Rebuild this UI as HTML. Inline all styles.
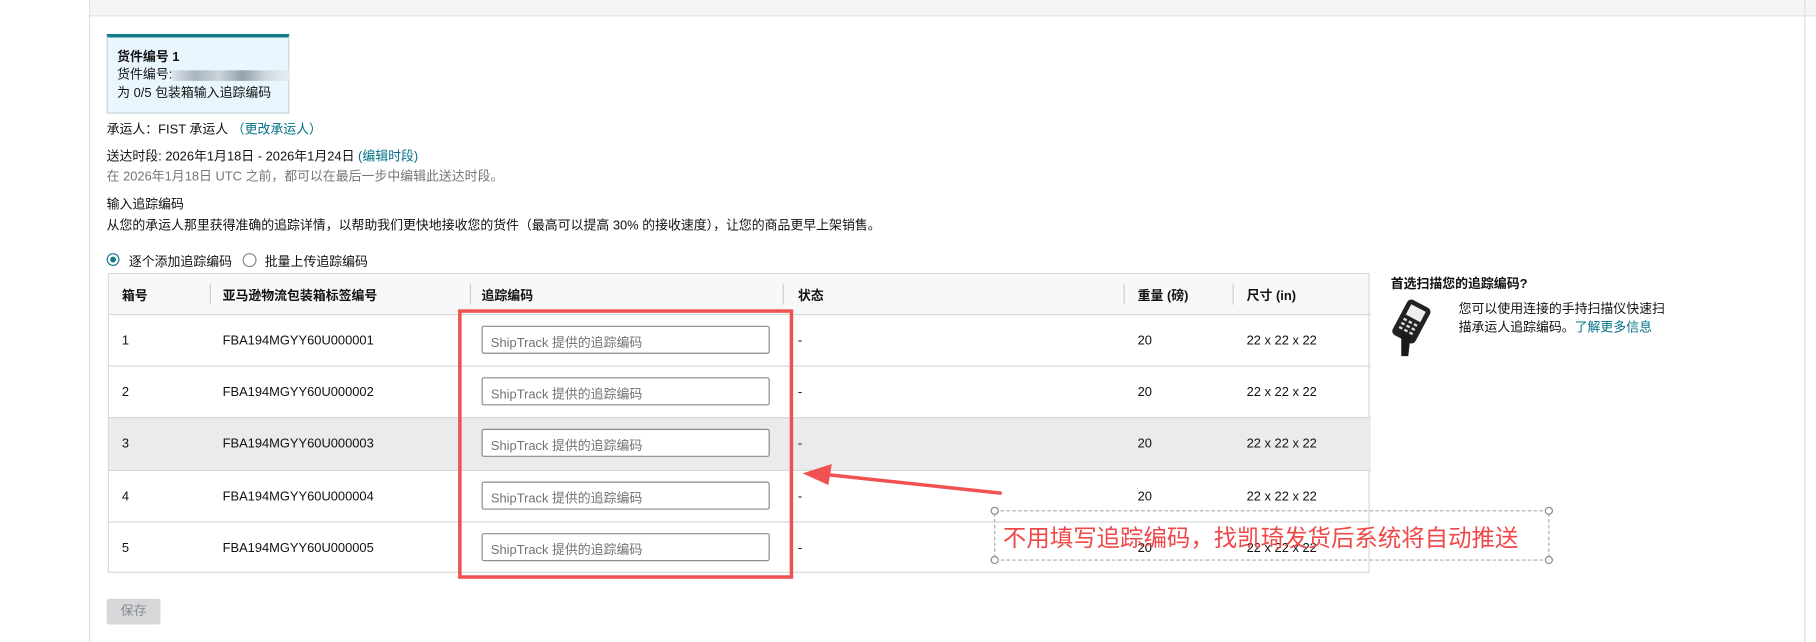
<!DOCTYPE html>
<html><head><meta charset="utf-8"><style>
html,body{margin:0;padding:0;background:#fff;width:1816px;height:642px;overflow:hidden}
#w{position:absolute;left:0;top:0;width:1550px;height:548px;transform:scale(1.17161);transform-origin:0 0;font-family:"Liberation Sans","Noto Sans CJK SC",sans-serif;font-size:11px;color:#111}
.a{position:absolute;white-space:nowrap}
.lk{color:#007185}
.g{color:#767676}
.hd{font-weight:bold}
.sep{position:absolute;top:8px;width:1px;height:18px;background:#ccc}
.row{position:absolute;left:0;width:1077px;height:44px;border-top:1px solid #d5d9d9}
.inp{position:absolute;left:318px;top:9px;width:246px;height:24px;border:1px solid #888c8c;border-radius:2px;background:#fff;box-sizing:border-box;padding:5px 0 0 7px;color:#6f7373;font-size:11px}
</style></head><body><div id="w">
<div class="a" style="left:76px;top:0;width:1474px;height:13px;background:#f5f5f5;border-bottom:1px solid #e3e3e3"></div>
<div class="a" style="left:76px;top:0;width:1px;height:548px;background:#ddd"></div>
<div class="a" style="left:1540px;top:0;width:1px;height:548px;background:#ddd"></div>

<div class="a" style="left:91px;top:29px;width:154px;height:64px;background:#e9f6fd;border:1px solid #c7d3da;border-top:3px solid #137c8b"></div>
<div class="a hd" style="left:100px;top:40px">货件编号 1</div>
<div class="a" style="left:100px;top:55px">货件编号:<span style="display:inline-block;width:100px;height:9px;background:linear-gradient(90deg,#d8dde3,#9aa5b2,#c4cbd3,#7e8a99,#c9d0d8,#e6ebef);vertical-align:middle;opacity:.8"></span></div>
<div class="a" style="left:100px;top:71px">为 0/5 包装箱输入追踪编码</div>

<div class="a" style="left:91px;top:102px">承运人：FIST 承运人 <span class="lk">（更改承运人）</span></div>
<div class="a" style="left:91px;top:125px">送达时段: 2026年1月18日 - 2026年1月24日 <span class="lk">(编辑时段)</span></div>
<div class="a g" style="left:91px;top:142px">在 2026年1月18日 UTC 之前，都可以在最后一步中编辑此送达时段。</div>
<div class="a" style="left:91px;top:166px">输入追踪编码</div>
<div class="a" style="left:91px;top:184px">从您的承运人那里获得准确的追踪详情，以帮助我们更快地接收您的货件（最高可以提高 30% 的接收速度），让您的商品更早上架销售。</div>

<div class="a" style="left:91px;top:216px;width:11px;height:11px;border:1px solid #137c8b;border-radius:50%;box-sizing:border-box"><div style="position:absolute;left:2px;top:2px;width:5px;height:5px;border-radius:50%;background:#137c8b"></div></div>
<div class="a" style="left:110px;top:215px">逐个添加追踪编码</div>
<div class="a" style="left:207px;top:216px;width:12px;height:12px;border:1px solid #888;border-radius:50%;box-sizing:border-box"></div>
<div class="a" style="left:226px;top:215px">批量上传追踪编码</div>

<div class="a" style="left:92px;top:233px;width:1077px;height:256px;border:1px solid #d5d9d9;box-sizing:border-box">
 <div class="a" style="left:0;top:0;width:1075px;height:34px;background:#f7f8f8"></div>
 <div class="a hd" style="left:11px;top:10px">箱号</div><div class="sep" style="left:86px"></div>
 <div class="a hd" style="left:97px;top:10px">亚马逊物流包装箱标签编号</div><div class="sep" style="left:308px"></div>
 <div class="a hd" style="left:318px;top:10px">追踪编码</div><div class="sep" style="left:575px"></div>
 <div class="a hd" style="left:588px;top:10px">状态</div><div class="sep" style="left:866px"></div>
 <div class="a hd" style="left:878px;top:10px">重量 (磅)</div><div class="sep" style="left:959px"></div>
 <div class="a hd" style="left:971px;top:10px">尺寸 (in)</div>

 <div class="row" style="top:34px"><div class="a" style="left:11px;top:16px">1</div><div class="a" style="left:97px;top:16px">FBA194MGYY60U000001</div><div class="inp">ShipTrack 提供的追踪编码</div><div class="a" style="left:588px;top:16px">-</div><div class="a" style="left:878px;top:16px">20</div><div class="a" style="left:971px;top:16px">22 x 22 x 22</div></div>
 <div class="row" style="top:78px"><div class="a" style="left:11px;top:16px">2</div><div class="a" style="left:97px;top:16px">FBA194MGYY60U000002</div><div class="inp">ShipTrack 提供的追踪编码</div><div class="a" style="left:588px;top:16px">-</div><div class="a" style="left:878px;top:16px">20</div><div class="a" style="left:971px;top:16px">22 x 22 x 22</div></div>
 <div class="row" style="top:122px;background:#eaebed"><div class="a" style="left:11px;top:16px">3</div><div class="a" style="left:97px;top:16px">FBA194MGYY60U000003</div><div class="inp">ShipTrack 提供的追踪编码</div><div class="a" style="left:588px;top:16px">-</div><div class="a" style="left:878px;top:16px">20</div><div class="a" style="left:971px;top:16px">22 x 22 x 22</div></div>
 <div class="row" style="top:167px"><div class="a" style="left:11px;top:16px">4</div><div class="a" style="left:97px;top:16px">FBA194MGYY60U000004</div><div class="inp">ShipTrack 提供的追踪编码</div><div class="a" style="left:588px;top:16px">-</div><div class="a" style="left:878px;top:16px">20</div><div class="a" style="left:971px;top:16px">22 x 22 x 22</div></div>
 <div class="row" style="top:211px"><div class="a" style="left:11px;top:16px">5</div><div class="a" style="left:97px;top:16px">FBA194MGYY60U000005</div><div class="inp">ShipTrack 提供的追踪编码</div><div class="a" style="left:588px;top:16px">-</div><div class="a" style="left:878px;top:16px">20</div><div class="a" style="left:971px;top:16px">22 x 22 x 22</div></div>
</div>

<div class="a" style="left:391px;top:264px;width:286px;height:230px;border:3px solid #f05252;box-sizing:border-box"></div>

<div class="a" style="left:91px;top:511px;width:46px;height:22px;background:#d5d7d9;border-radius:2px;color:#8a8d90;text-align:center;line-height:22px">保存</div>

<div class="a hd" style="left:1187px;top:234px">首选扫描您的追踪编码?</div>
<svg class="a" style="left:1184px;top:254px" width="48" height="52" viewBox="0 0 48 52">
 <g transform="rotate(28 22 20)"><rect x="10" y="4" width="22" height="34" rx="4" fill="#222"/><rect x="14" y="8" width="14" height="10" fill="#eee"/><g fill="#ddd"><rect x="14" y="21" width="3" height="2"/><rect x="19" y="21" width="3" height="2"/><rect x="24" y="21" width="3" height="2"/><rect x="14" y="25" width="3" height="2"/><rect x="19" y="25" width="3" height="2"/><rect x="24" y="25" width="3" height="2"/><rect x="14" y="29" width="3" height="2"/><rect x="19" y="29" width="3" height="2"/><rect x="24" y="29" width="3" height="2"/></g></g>
 <path d="M12 28 L20 32 L18 50 L12 50 Z" fill="#1a1a1a"/>
</svg>
<div class="a" style="left:1245px;top:256px;line-height:16px">您可以使用连接的手持扫描仪快速扫<br>描承运人追踪编码。<span class="lk">了解更多信息</span></div>

<svg class="a" style="left:0;top:0" width="1550" height="548">
 <line x1="855" y1="421" x2="705" y2="405" stroke="#f05252" stroke-width="3"/>
 <polygon points="685,404 710,396 707,414" fill="#f05252"/>
 <rect x="849" y="436" width="473" height="42" fill="none" stroke="#aaa" stroke-dasharray="3,2"/>
 <g fill="#fff" stroke="#888"><circle cx="849" cy="436" r="3"/><circle cx="1322" cy="436" r="3"/><circle cx="849" cy="478" r="3"/><circle cx="1322" cy="478" r="3"/></g>
</svg>
<div class="a" style="left:856px;top:443px;font-size:20px;color:#f04848;letter-spacing:0">不用填写追踪编码，找凯琦发货后系统将自动推送</div>
</div></body></html>
